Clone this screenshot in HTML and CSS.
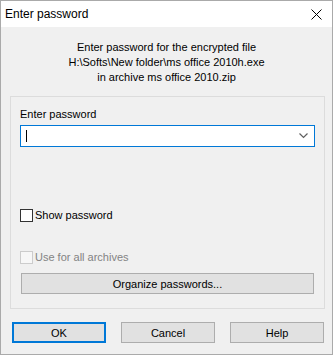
FILE: index.html
```html
<!DOCTYPE html>
<html lang="en">
<head>
    <meta charset="UTF-8">
    <title>Enter password</title>
    <link rel="stylesheet" href="styles.css">
</head>
<body>
<div class="window">
    <div class="titlebar">
        <span class="title">Enter password</span>
        <svg class="close" width="11" height="11" viewBox="0 0 11 11">
            <path d="M0.5 0.5 L10.5 10.5 M10.5 0.5 L0.5 10.5" stroke="#000" stroke-width="1" fill="none"/>
        </svg>
    </div>

    <div class="content">
        <p class="info">
            Enter password for the encrypted file<br>
            H:\Softs\New folder\ms office 2010h.exe<br>
            in archive ms office 2010.zip
        </p>

        <div class="group">
            <label class="field-label" for="password">Enter password</label>
            <div class="combo" id="password">
                <span class="caret"></span>
                <svg class="chevron" width="10" height="6" viewBox="0 0 10 6">
                    <path d="M0.5 0.5 L4.5 4.5 L8.5 0.5" stroke="#606060" stroke-width="1.2" fill="none"/>
                </svg>
            </div>

            <div class="check show">
                <span class="box"></span>
                <span>Show password</span>
            </div>

            <div class="check disabled">
                <span class="box"></span>
                <span>Use for all archives</span>
            </div>

            <button class="btn wide">Organize passwords...</button>
        </div>

        <div class="actions">
            <button class="btn default">OK</button>
            <button class="btn">Cancel</button>
            <button class="btn">Help</button>
        </div>
    </div>
</div>
</body>
</html>
```

FILE: styles.css
```css
body {
    margin: 0;
    font-family: "Liberation Sans", Arial, sans-serif;
    font-size: 11px;
    color: #000;
}

.window {
    width: 333px;
    height: 355px;
    box-sizing: border-box;
    border: 1px solid #aaaaaa;
    background-color: #f0f0f0;
    display: flex;
    flex-direction: column;
}

.titlebar {
    height: 26px;
    background-color: #fff;
    display: flex;
    align-items: center;
    padding: 0 10px 0 4px;
}

.title {
    font-size: 12px;
}

.close {
    margin-left: auto;
}

.content {
    flex: 1;
    display: flex;
    flex-direction: column;
}

.info {
    margin: 13px 0 0;
    text-align: center;
    line-height: 15px;
}

.group {
    width: 315px;
    height: 213px;
    box-sizing: border-box;
    margin: 11px 0 0 9px;
    border: 1px solid #dcdcdc;
    padding: 10px 9px 0;
    display: flex;
    flex-direction: column;
}

.field-label {
    line-height: 15px;
}

.combo {
    margin-top: 3px;
    height: 22px;
    box-sizing: border-box;
    border: 1px solid #0078d7;
    background-color: #fff;
    display: flex;
    align-items: center;
    padding: 0 5px 0 5px;
}

.caret {
    width: 1px;
    height: 12px;
    background-color: #000;
}

.chevron {
    margin-left: auto;
}

.check {
    display: flex;
    align-items: center;
    gap: 2px;
    line-height: 15px;
}

.check .box {
    width: 13px;
    height: 13px;
    box-sizing: border-box;
    border: 1px solid #333;
    background-color: #fff;
}

.show {
    margin-top: 61px;
}

.disabled {
    margin-top: 27px;
    color: #838383;
}

.disabled .box {
    border-color: #cccccc;
    background-color: #f7f7f7;
}

.btn {
    height: 21px;
    box-sizing: border-box;
    border: 1px solid #adadad;
    background-color: #e1e1e1;
    font-family: inherit;
    font-size: 11px;
    color: #000;
    padding: 0;
}

.wide {
    width: 293px;
    margin: 8px 0 0 1px;
}

.actions {
    display: flex;
    gap: 15px;
    margin: 13px 0 0 11px;
}

.actions .btn {
    width: 94px;
}

.default {
    border: 2px solid #0078d7;
}
```
